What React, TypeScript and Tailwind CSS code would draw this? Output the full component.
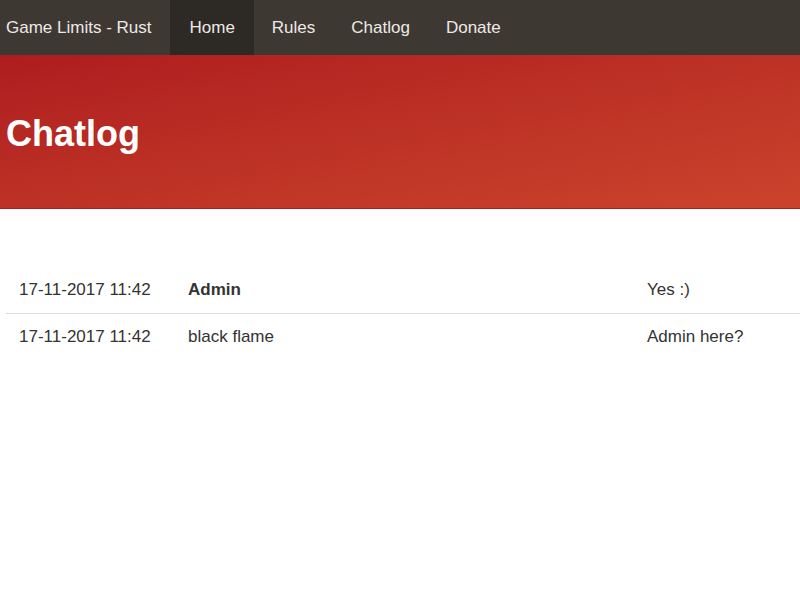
export default function App() {
  const rows = [
    { time: "17-11-2017 11:42", name: "Admin", bold: true, msg: "Yes :)" },
    { time: "17-11-2017 11:42", name: "black flame", bold: false, msg: "Admin here?" },
  ];
  const nav = ["Home", "Rules", "Chatlog", "Donate"];

  return (
    <div className="min-h-screen bg-white font-['Liberation_Sans',Arial,sans-serif] text-[#333]">
      <nav className="h-[55px] bg-[#3e3833] flex items-stretch text-[17px] text-[#ece9e6]">
        <div className="flex items-center pl-[6px] pr-[19px]">Game Limits - Rust</div>
        {nav.map((item) => (
          <a
            key={item}
            className={`flex items-center px-[18px] ${item === "Home" ? "bg-[#2d2925] px-[19px]" : ""}`}
          >
            {item}
          </a>
        ))}
      </nav>

      <header className="h-[154px] bg-linear-to-br from-[#ae1c1f] to-[#cb432c] border-b border-[#b11f20] flex items-center pl-[6px]">
        <h1 className="text-[36px] font-bold text-white leading-none pt-[4px]">Chatlog</h1>
      </header>

      <div className="pt-[58px] pl-[6px]">
        <table className="w-full table-fixed text-[17px] border-collapse">
          <tbody>
            {rows.map((r, i) => (
              <tr key={i} className={i === 0 ? "border-b border-[#ddd]" : ""}>
                <td className="w-[182px] pl-[13px] py-[12px] leading-[22px]">{r.time}</td>
                <td className={`w-[459px] py-[12px] leading-[22px] ${r.bold ? "font-bold" : ""}`}>{r.name}</td>
                <td className="py-[12px] leading-[22px]">{r.msg}</td>
              </tr>
            ))}
          </tbody>
        </table>
      </div>
    </div>
  );
}
